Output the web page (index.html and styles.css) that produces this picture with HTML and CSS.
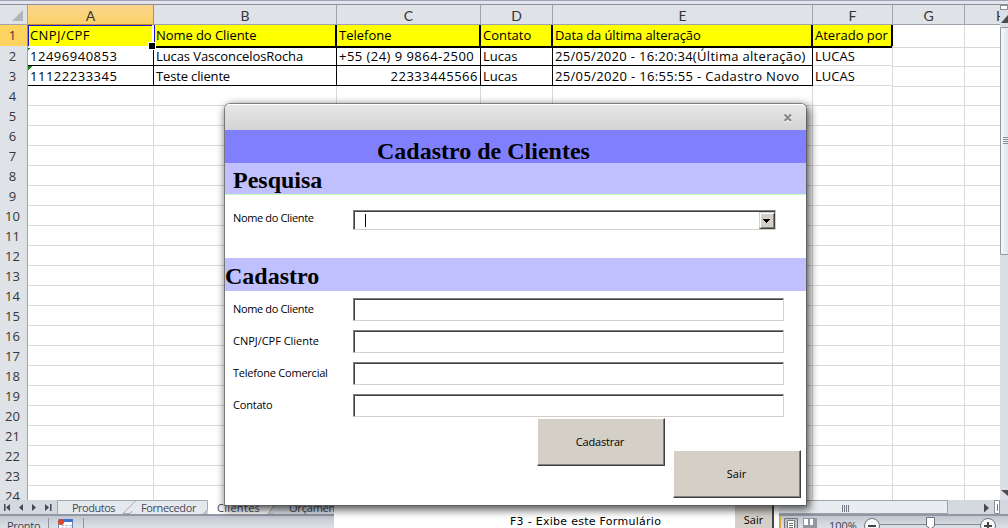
FILE: index.html
```html
<!DOCTYPE html>
<html lang="pt-BR">
<head>
<meta charset="utf-8">
<title>Cadastro de Clientes</title>
<link rel="stylesheet" href="styles.css">
</head>
<body>
<main class="app">
  <div class="ribbon-edge"></div>
  <div class="workspace">
    <section class="sheet">
      <div class="row heads">
        <span class="corner"><svg width="13" height="12"><path d="M12 0V11H1Z" fill="#b2b5ba"/></svg></span>
        <span class="selected">A</span><span>B</span><span>C</span><span>D</span><span>E</span><span>F</span><span>G</span><span class="cut">H</span>
      </div>
      <div class="row titles">
        <b class="num selected">1</b><span class="active"><i class="t1">CNPJ/CPF</i></span><span class="after-active"><i class="t2">Nome do Cliente</i></span><span><i class="t3">Telefone</i></span><span><i class="t4">Contato</i></span><span><i class="t5">Data da última alteração</i></span><span><i class="t6">Aterado por</i></span><em></em>
      </div>
      <div class="row data">
        <b class="num">2</b><span class="flag"><i class="d1">12496940853</i></span><span><i class="d2">Lucas VasconcelosRocha</i></span><span><i class="d3">+55 (24) 9 9864-2500</i></span><span><i class="d4">Lucas</i></span><span><i class="d5">25/05/2020 - 16:20:34(Última alteração)</i></span><span><i class="d6">LUCAS</i></span><em></em>
      </div>
      <div class="row data">
        <b class="num">3</b><span class="flag"><i class="d1">11122233345</i></span><span><i class="d7">Teste cliente</i></span><span class="right"><i class="d8">22333445566</i></span><span><i class="d4">Lucas</i></span><span><i class="d9">25/05/2020 - 16:55:55 - Cadastro Novo</i></span><span><i class="d6">LUCAS</i></span><em></em>
      </div>
      <div class="row"><b class="num">4</b></div>
      <div class="row"><b class="num">5</b></div>
      <div class="row"><b class="num">6</b></div>
      <div class="row"><b class="num">7</b></div>
      <div class="row"><b class="num">8</b></div>
      <div class="row"><b class="num">9</b></div>
      <div class="row"><b class="num">10</b></div>
      <div class="row"><b class="num">11</b></div>
      <div class="row"><b class="num">12</b></div>
      <div class="row"><b class="num">13</b></div>
      <div class="row"><b class="num">14</b></div>
      <div class="row"><b class="num">15</b></div>
      <div class="row"><b class="num">16</b></div>
      <div class="row"><b class="num">17</b></div>
      <div class="row"><b class="num">18</b></div>
      <div class="row"><b class="num">19</b></div>
      <div class="row"><b class="num">20</b></div>
      <div class="row"><b class="num">21</b></div>
      <div class="row"><b class="num">22</b></div>
      <div class="row"><b class="num">23</b></div>
      <div class="row"><b class="num">24</b></div>
    </section>
    <aside class="vscroll">
      <div class="split"></div>
      <svg class="up" width="8" height="15"><path d="M1 11L8 3V11Z" fill="#4b4b4b"/></svg>
      <div class="vthumb"><svg width="5" height="8"><path d="M0 .5H5M0 2.500H5M0 4.500H5M0 6.500H5" stroke="#8b9097"/></svg></div>
      <svg class="down" width="8" height="19"><path d="M1 9H8V15Z" fill="#4b4b4b"/></svg>
    </aside>
  </div>
  <nav class="tabs">
    <svg width="334" height="16" viewBox="0 0 334 16">
      <path d="M58 0H207V11Q207 14 203 14H58Z" fill="#e5e9ee"/>
      <path d="M207 0H274V14H207Z" fill="#fff"/>
      <path d="M274 0H334V14H270Z" fill="#dfe4ea"/>
      <path d="M57.500 14V.5H207.500V10L203 14M136 .5L123 13.500H129Q131 13.500 132 11M207 10V14H203M278 0L268 14H274" fill="none" stroke="#a3a9b3"/>
      <path d="M4 4H5.500V11H4ZM10 4V11L6 7.500ZM23 4V11L19 7.500ZM32 4V11L36 7.500ZM45 4V11L49 7.500ZM50 4H51.500V11H50Z" fill="#414957"/>
    </svg>
    <span class="tab produtos">Produtos</span><span class="tab fornecedor">Fornecedor</span><span class="tab clientes">Clientes</span><span class="tab orc">Orçamen</span>
    <div class="hscroll">
      <svg width="230" height="16" viewBox="0 0 230 16">
        <path d="M0 .5H169.500V13.500H0Z" fill="#e9edf2" stroke="#9da3ab"/>
        <path d="M64.500 5V12M66.500 5V12M68.500 5V12M70.500 5V12" stroke="#737a83"/>
        <path d="M206 3.500L211 8L206 12.500Z" fill="#4b4b4b"/>
        <path d="M216.500 .5H221.500V13.500H216.500Z" fill="#fff" stroke="#8b9097"/>
        <path d="M219.500 4V11" stroke="#777"/>
      </svg>
    </div>
  </nav>
  <footer class="status">
    <span class="pronto">Pronto</span>
    <svg class="macro" width="40" height="13"><path d="M.5 2V13M35.500 2V13" stroke="#8d939d"/><path d="M10.500 3.500H24.500V13H10.500Z" fill="#fff" stroke="#6c83b5"/><path d="M11 3H25V6H11Z" fill="#3f73cf"/><path d="M13 9.500H24M13 12H24" stroke="#a7bde2" stroke-dasharray="3 1"/><circle cx="13" cy="6" r="3" fill="#d6492b"/></svg>
    <svg class="views" width="45" height="13"><path d="M0 0H2V13H0Z" fill="#dba93d"/><path d="M5.500 2.500H18.500V13H5.500Z" fill="#bfc3c9" stroke="#73777d"/><path d="M8.500 4.500H15.500V13H8.500Z" fill="#fff" stroke="#777"/><path d="M10 7.500H14M10 9.500H14M10 11.500H14" stroke="#777"/><path d="M24 2H38V13H24Z" fill="#92969d"/><path d="M25 3H29V9H25ZM31 3H34V9H31Z" fill="#fff"/></svg>
    <span class="pct">100%</span>
    <svg class="zoombar" width="144" height="13"><path d="M16 8.500H120" stroke="#868b92"/><circle cx="8" cy="10" r="7.500" fill="#f7f8fa" stroke="#6f747b"/><path d="M4 10H12" stroke="#444" stroke-width="2"/><path d="M62.500 1.500H70.500V10L66.500 13L62.500 10Z" fill="#fff" stroke="#6f747b"/><circle cx="124" cy="10" r="7.500" fill="#f7f8fa" stroke="#6f747b"/><path d="M120 10H128M124 6V13" stroke="#444" stroke-width="2"/></svg>
  </footer>
</main>

<section class="back-window">
  <span class="hint">F3 - Exibe este Formulário</span>
  <span class="back-sair">Sair</span>
</section>

<section class="dialog">
  <header class="titlebar"><svg width="10" height="10"><path d="M1.500 2.500L8 9M8 2.500L1.500 9" stroke="#fff" stroke-width="2"/><path d="M1.500 1.500L8 8M8 1.500L1.500 8" stroke="#8a8a8a" stroke-width="2.200"/></svg></header>
  <h1>Cadastro de Clientes</h1>
  <h2 class="search">Pesquisa</h2>
  <div class="field search-field"><label class="l1">Nome do Cliente</label><div class="combo"><i class="caret"></i><span class="drop"><svg width="7" height="4" shape-rendering="crispEdges"><path d="M0 0H7L3.500 4Z"/></svg></span></div></div>
  <h2 class="register">Cadastro</h2>
  <div class="form">
    <div class="field"><label class="l1">Nome do Cliente</label><div class="input"></div></div>
    <div class="field"><label class="l2">CNPJ/CPF Cliente</label><div class="input"></div></div>
    <div class="field"><label class="l3">Telefone Comercial</label><div class="input"></div></div>
    <div class="field"><label class="l4">Contato</label><div class="input"></div></div>
  </div>
  <div class="btn save">Cadastrar</div>
  <div class="btn exit">Sair</div>
</section>
</body>
</html>
```
FILE: styles.css
```css
* { box-sizing: border-box; }
body { margin: 0; width: 1008px; height: 528px; overflow: hidden; position: relative; background: #fff; }
i { font-style: normal; display: inline-block; white-space: nowrap; }
svg { display: block; }
.app { display: flex; flex-direction: column; height: 528px; overflow: hidden; font-family: "Open Sans", "Noto Sans", sans-serif; font-size: 13px; }
.ribbon-edge { height: 5px; flex: none; background: linear-gradient(#a0a3b2 1px, #e4e4ee 1px 4px, #8d9095 4px); }
.workspace { display: flex; height: 495px; flex: none; overflow: hidden; }
.sheet {
  width: 1000px; flex: none; color: #000;
  background: linear-gradient(#d9d9d9, #d9d9d9) 153px 0/1px 100% no-repeat, linear-gradient(#d9d9d9, #d9d9d9) 336px 0/1px 100% no-repeat,
    linear-gradient(#d9d9d9, #d9d9d9) 480px 0/1px 100% no-repeat, linear-gradient(#d9d9d9, #d9d9d9) 552px 0/1px 100% no-repeat,
    linear-gradient(#d9d9d9, #d9d9d9) 812px 0/1px 100% no-repeat, linear-gradient(#d9d9d9, #d9d9d9) 892px 0/1px 100% no-repeat,
    linear-gradient(#d9d9d9, #d9d9d9) 964px 0/1px 100% no-repeat, #fff;
}
.row { display: grid; grid-template-columns: 28px 126px 183px 144px 72px 260px 80px 72px 35px; height: 20px; line-height: 19px; border-bottom: 1px solid #d9d9d9; }
.row em { grid-column: 8 / 10; border-bottom: 1px solid #d9d9d9; }
.heads { background: #dfe2e7; border-color: #9ea5ae; color: #363636; text-align: center; line-height: 21px; font-family: Lato, sans-serif; font-size: 14px; }
.heads span { border-right: 1px solid #9ea5ae; overflow: hidden; }
.heads .selected { background: linear-gradient(#f9d58e, #fcd267); box-shadow: 0 1px #c58c2e; border-color: #c58c2e; }
.heads .corner { padding: 5px 0 0 11px; }
.heads .cut { text-align: left; padding-left: 31px; border-right: 0; }
.num { background: #dfe2e7; border-right: 1px solid #9ea5ae; box-shadow: 0 1px #9ea5ae; text-align: center; font-weight: 400; color: #363636; line-height: 21px; padding-right: 2px; }
.num.selected { background: #fcd45f; border-color: #c58c2e; box-shadow: 0 1px #c58c2e; }
.titles { height: 21px; border-bottom: 0; }
.titles span { background: #ff0; border: solid #000; border-width: 0 2px 2px 0; padding-left: 2px; line-height: 21px; overflow: hidden; }
.titles .active { position: relative; overflow: visible; box-shadow: inset 1px 1px #1717c9; border-width: 0 2px 2px 0; border-color: #fff; }
.titles .after-active { box-shadow: inset 1px 0 #1717c9; }
.titles .active::after { content: ""; position: absolute; right: -4px; bottom: -4px; width: 6px; height: 6px; background: #000; border: 1px solid #fff; z-index: 1; }
.data { border: 0; }
.data span { border: solid #000; border-width: 0 1px 1px 0; padding-left: 2px; line-height: 21px; height: 20px; white-space: nowrap; }
.data span:nth-child(7) { border-color: #d9d9d9; }
.titles + .data .flag { box-shadow: inset 0 1px #000; }
.data .right { text-align: right; padding-right: 2px; }
.data .flag { background: linear-gradient(135deg, #118711 3.500px, transparent 3.500px); }
.t1 { letter-spacing: .38px; }
.t2 { letter-spacing: -.07px; }
.t5 { letter-spacing: -.12px; }
.d1, .d8 { letter-spacing: .52px; }
.d2 { letter-spacing: -.09px; }
.d3 { letter-spacing: .46px; }
.d5 { letter-spacing: .31px; }
.d7 { letter-spacing: -.15px; }
.d9 { letter-spacing: .33px; }
.vscroll { width: 8px; background: #dce0e6; display: flex; flex-direction: column; }
.split { height: 5px; border: 1px solid #8b9097; background: #fff; flex: none; }
.up { margin-top: 2px; flex: none; }
.vthumb { height: 228px; border: 1px solid #9298a2; border-right: 0; border-radius: 2px 0 0 2px; background: linear-gradient(90deg, #f7f9fb, #e1e6ed); flex: none; padding: 109px 0 0 2px; }
.down { margin-top: auto; }
.tabs { display: flex; height: 16px; flex: none; position: relative; overflow: hidden; background: #d4d9e0; border-bottom: 2px solid #9297a5; }
.tab { position: absolute; top: 0; line-height: 15px; font-size: 11px; color: #444955; white-space: nowrap; }
.produtos { left: 72px; letter-spacing: -.5px; }
.fornecedor { left: 141px; letter-spacing: -.4px; }
.clientes { left: 217px; letter-spacing: .3px; }
.orc { left: 289px; letter-spacing: -.2px; }
.hscroll { margin-left: auto; width: 230px; }
.status { display: flex; height: 12px; flex: none; overflow: hidden; background: linear-gradient(#c2c7d0, #dde1e7); font-size: 11px; color: #3c4350; padding-left: 7px; }
.pronto { line-height: 20px; width: 41px; letter-spacing: -.3px; flex: none; }
.macro { flex: none; }
.views { margin-left: 691px; flex: none; margin-right: 5px; }
.pct { width: 31px; line-height: 19px; flex: none; margin-right: 4px; }
.zoombar { flex: none; }
.back-window { position: absolute; left: 334px; top: 505px; width: 445px; height: 23px; background: #fff; display: flex; font: 11px "DejaVu Sans", sans-serif; padding-left: 176px; }
.hint { width: 225px; flex: none; padding-top: 10px; line-height: 13px; white-space: nowrap; letter-spacing: .28px; }
.back-sair { width: 39px; background: #d4d0c8; border-right: 2px solid #444; text-align: center; padding-top: 8px; line-height: 13px; font-family: "Open Sans", sans-serif; }
.dialog { position: absolute; left: 225px; top: 104px; width: 581px; height: 401px; background: #fff; border-radius: 5px 5px 0 0; box-shadow: 0 0 0 1px rgba(80,80,80,.6), 2px 3px 9px 2px rgba(0,0,0,.65); display: flex; flex-direction: column; font: 11px "Open Sans", "Noto Sans", sans-serif; }
.titlebar { height: 26px; flex: none; background: linear-gradient(#e7e7e7, #d3d3d3); border-top: 1px solid #fff; border-radius: 5px 5px 0 0; padding: 8px 0 0 558px; }
h1, h2 { margin: 0; flex: none; font: bold 24px "Liberation Serif", serif; overflow: hidden; }
h1 { height: 33px; background: #8080ff; padding-left: 152px; line-height: 43px; }
h2 { background: #c0c0ff; }
.search { height: 32px; padding-left: 8px; line-height: 35px; border-bottom: 1px solid #c0ffc0; }
.search-field { margin: 15px 0 28px; height: 20px; }
.register { height: 33px; line-height: 37px; }
.field { display: flex; padding-left: 8px; flex: none; }
.field label { width: 120px; flex: none; line-height: 15px; }
.field .l1 { letter-spacing: -.35px; }
.field .l2 { letter-spacing: -.03px; }
.field .l3 { letter-spacing: -.22px; }
.field .l4 { letter-spacing: -.2px; }
.combo, .input { border: 1px solid; border-color: #808080 #d4d0c8 #d4d0c8 #808080; box-shadow: inset 1px 1px #404040; background: #fff; }
.combo { width: 423px; height: 20px; display: flex; padding: 1px 0 0 11px; }
.caret { width: 1px; height: 13px; margin-top: 2px; background: #000; }
.drop { width: 16px; height: 17px; margin-left: auto; background: #d4d0c8; border: 1px solid; border-color: #d4d0c8 #404040 #404040 #d4d0c8; box-shadow: inset 1px 1px #fff, inset -1px -1px #808080; padding: 6px 0 0 3px; }
.form { display: flex; flex-direction: column; gap: 9px; padding-top: 7px; }
.input { width: 431px; height: 23px; }
.field .input { flex: none; }
.form label { line-height: 22px; }
.btn { width: 128px; height: 48px; background: #d4d0c8; border: 1px solid; border-color: #fff #404040 #404040 #fff; box-shadow: inset -1px -1px #808080; text-align: center; line-height: 46px; flex: none; }
.save { margin: 1px 0 0 312px; letter-spacing: -.2px; padding-right: 2px; }
.exit { margin: -16px 0 0 448px; padding-right: 1px; }
```
